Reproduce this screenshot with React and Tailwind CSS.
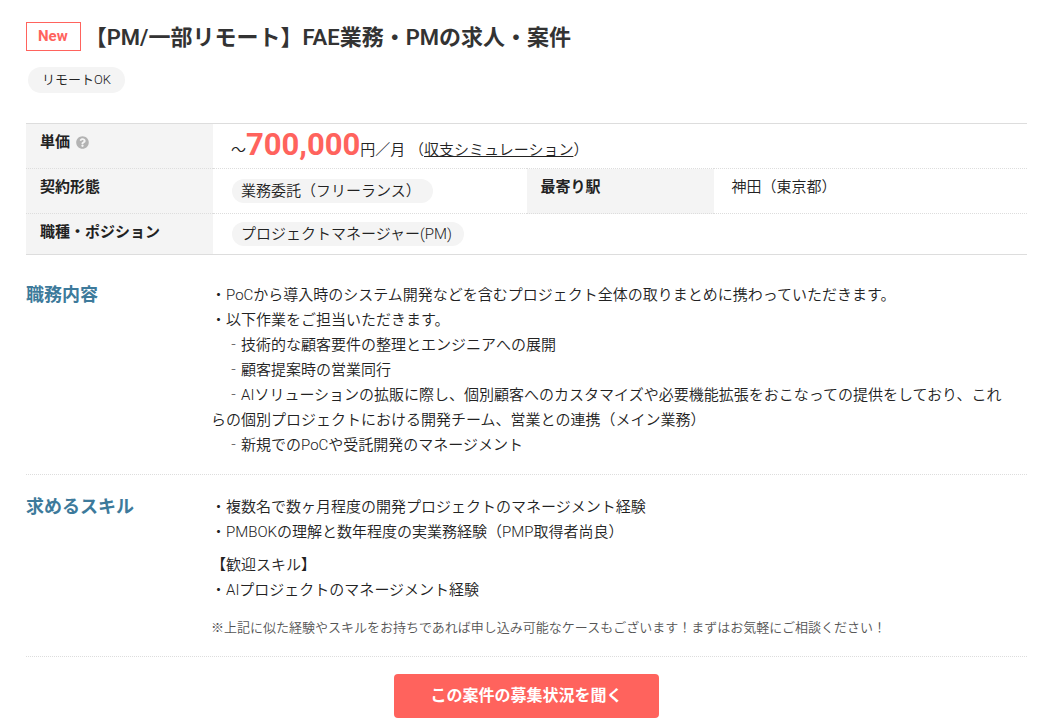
import { FaQuestionCircle } from 'react-icons/fa'

const duties = [
  { text: '・PoCから導入時のシステム開発などを含むプロジェクト全体の取りまとめに携わっていただきます。' },
  { text: '・以下作業をご担当いただきます。' },
  { sub: true, text: '技術的な顧客要件の整理とエンジニアへの展開' },
  { sub: true, text: '顧客提案時の営業同行' },
  {
    sub: true,
    text: 'AIソリューションの拡販に際し、個別顧客へのカスタマイズや必要機能拡張をおこなっての提供をしており、これらの個別プロジェクトにおける開発チーム、営業との連携（メイン業務）',
  },
  { sub: true, text: '新規でのPoCや受託開発のマネージメント' },
]

const skills = [
  '・複数名で数ヶ月程度の開発プロジェクトのマネージメント経験',
  '・PMBOKの理解と数年程度の実業務経験（PMP取得者尚良）',
]

const welcomeSkills = ['【歓迎スキル】', '・AIプロジェクトのマネージメント経験']

function Label({ children }) {
  return (
    <th scope="row" className="bg-[#f4f4f4] pl-3.5 pt-1.5 text-left align-top font-bold leading-6">
      {children}
    </th>
  )
}

function Tag({ children }) {
  return (
    <span className="ml-px inline-block rounded-full bg-[#f4f4f4] pl-[9px] pr-3 align-top leading-6">
      {children}
    </span>
  )
}

function Section({ title, children }) {
  return (
    <section className="flex border-b border-dotted border-[#ddd] pb-4 pt-5">
      <h2 className="w-[185px] shrink-0 text-lg font-bold leading-6 text-[#3d7a9b]">{title}</h2>
      <div className="min-w-0 flex-1 pr-4 leading-[25px]">{children}</div>
    </section>
  )
}

function App() {
  return (
    <main
      lang="ja"
      className="bg-white pb-2 pl-[26px] pr-6 pt-[22px] font-[Roboto,'Noto_Sans_CJK_JP',sans-serif] text-[15px] font-[350] text-[#222]"
    >
      <header>
        <div className="flex items-center gap-1">
          <span className="border border-[#ff635d] pl-[11px] pr-3 text-[15px] font-bold leading-[27px] text-[#ff635d]">
            New
          </span>
          <h1 className="pt-0.5 text-[22px] font-semibold leading-[27px] text-[#333]">
            【PM/一部リモート】FAE業務・PMの求人・案件
          </h1>
        </div>
        <span className="ml-0.5 mt-4 inline-block rounded-full bg-[#f4f4f4] px-3.5 align-top text-[13px] leading-[26px]">
          リモートOK
        </span>
      </header>

      <table className="mt-[30px] w-full table-fixed border-y border-[#ddd]">
        <colgroup>
          <col className="w-[187px]" />
          <col />
          <col className="w-[187px]" />
          <col />
        </colgroup>
        <tbody>
          <tr className="border-b border-dotted border-[#ddd]">
            <Label>
              <span className="flex items-center gap-1.5">
                単価
                <FaQuestionCircle className="size-[13px] text-[#b3b3b3]" />
              </span>
            </Label>
            <td colSpan={3} className="pl-[18px] pt-2 leading-9">
              〜<strong className="text-[31px] font-bold leading-6 text-[#ff635d]">700,000</strong>円／月
              （<a href="#simulation" className="underline">収支シミュレーション</a>）
            </td>
          </tr>
          <tr className="border-b border-dotted border-[#ddd]">
            <Label>契約形態</Label>
            <td className="py-2.5 pl-[18px]">
              <Tag>業務委託（フリーランス）</Tag>
            </td>
            <Label>最寄り駅</Label>
            <td className="pl-[18px] pt-1.5 align-top leading-6">神田（東京都）</td>
          </tr>
          <tr>
            <Label>職種・ポジション</Label>
            <td colSpan={3} className="py-2 pl-[18px]">
              <Tag>プロジェクトマネージャー(PM)</Tag>
            </td>
          </tr>
        </tbody>
      </table>

      <div className="pt-2">
        <Section title="職務内容">
          {duties.map(({ sub, text }) => (
            <p key={text}>
              {sub && <span className="font-['Noto_Sans_CJK_JP',sans-serif] leading-none">　‐</span>}
              {text}
            </p>
          ))}
        </Section>
        <Section title="求めるスキル">
          {skills.map((line) => (
            <p key={line}>{line}</p>
          ))}
          <div className="mt-2">
            {welcomeSkills.map((line) => (
              <p key={line}>{line}</p>
            ))}
          </div>
          <p className="mt-3 text-[13px] text-[#555]">
            ※上記に似た経験やスキルをお持ちであれば申し込み可能なケースもございます！まずはお気軽にご相談ください！
          </p>
        </Section>
      </div>

      <div className="mt-[17px] flex justify-center">
        <button type="button" className="rounded bg-[#ff635d] px-9 text-base font-bold leading-[44px] text-white">
          この案件の募集状況を聞く
        </button>
      </div>
    </main>
  )
}

export default App
